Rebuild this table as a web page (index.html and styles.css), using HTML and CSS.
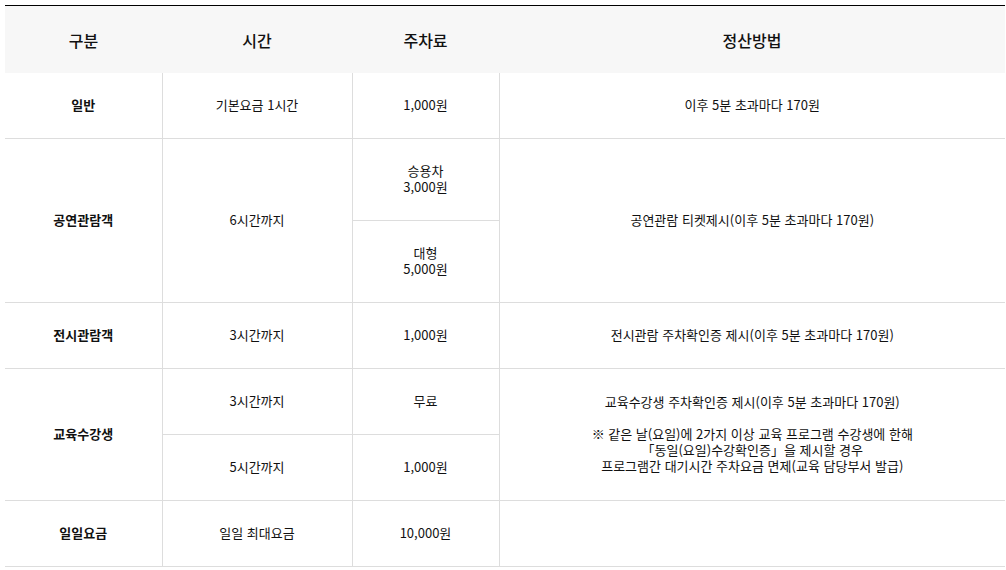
FILE: index.html
```html
<!DOCTYPE html>
<html lang="ko">
<head>
<meta charset="utf-8">
<title>주차요금</title>
<link rel="stylesheet" href="styles.css">
</head>
<body>
<div class="wrap">
  <table class="fee">
    <colgroup>
      <col class="c1"><col class="c2"><col class="c3"><col class="c4">
    </colgroup>
    <thead>
      <tr>
        <th>구분</th>
        <th>시간</th>
        <th>주차료</th>
        <th>정산방법</th>
      </tr>
    </thead>
    <tbody>
      <tr>
        <td class="cat">일반</td>
        <td>기본요금 1시간</td>
        <td>1,000원</td>
        <td class="last">이후 5분 초과마다 170원</td>
      </tr>
      <tr>
        <td class="cat" rowspan="2">공연관람객</td>
        <td rowspan="2">6시간까지</td>
        <td>승용차<br>3,000원</td>
        <td class="last" rowspan="2">공연관람 티켓제시(이후 5분 초과마다 170원)</td>
      </tr>
      <tr>
        <td>대형<br>5,000원</td>
      </tr>
      <tr>
        <td class="cat">전시관람객</td>
        <td>3시간까지</td>
        <td>1,000원</td>
        <td class="last">전시관람 주차확인증 제시(이후 5분 초과마다 170원)</td>
      </tr>
      <tr>
        <td class="cat" rowspan="2">교육수강생</td>
        <td>3시간까지</td>
        <td>무료</td>
        <td class="last" rowspan="2">교육수강생 주차확인증 제시(이후 5분 초과마다 170원)<br><br>※ 같은 날(요일)에 2가지 이상 교육 프로그램 수강생에 한해<br>「동일(요일)수강확인증」을 제시할 경우<br>프로그램간 대기시간 주차요금 면제(교육 담당부서 발급)</td>
      </tr>
      <tr>
        <td>5시간까지</td>
        <td>1,000원</td>
      </tr>
      <tr>
        <td class="cat">일일요금</td>
        <td>일일 최대요금</td>
        <td>10,000원</td>
        <td class="last"></td>
      </tr>
    </tbody>
  </table>
</div>
</body>
</html>
```

FILE: styles.css
```css
html, body {
  margin: 0;
  padding: 0;
  background: #fff;
}

body {
  font-family: "Noto Sans CJK KR", "Noto Sans", sans-serif;
  color: #111;
}

.wrap {
  padding: 5px 1px 0 5px;
}

.fee {
  width: 1000px;
  border-collapse: collapse;
  table-layout: fixed;
  border-top: 1px solid #000;
  border-bottom: 1px solid #ddd;
}

.c1 { width: 157px; }
.c2 { width: 190px; }
.c3 { width: 147px; }
.c4 { width: 506px; }

.fee th {
  background: #f7f7f7;
  font-size: 16px;
  font-weight: 500;
  line-height: 20px;
  color: #111;
  padding: 24px 8px 23px;
  text-align: center;
}

.fee td {
  font-size: 13px;
  line-height: 16px;
  padding: 24px 8px 25px;
  text-align: center;
  vertical-align: middle;
  border-top: 1px solid #ddd;
  border-left: 1px solid #ddd;
  color: #111;
}

.fee tbody tr:first-child td {
  border-top: none;
}

.fee td.cat {
  border-left: none;
  font-weight: 700;
  color: #111;
}
```
